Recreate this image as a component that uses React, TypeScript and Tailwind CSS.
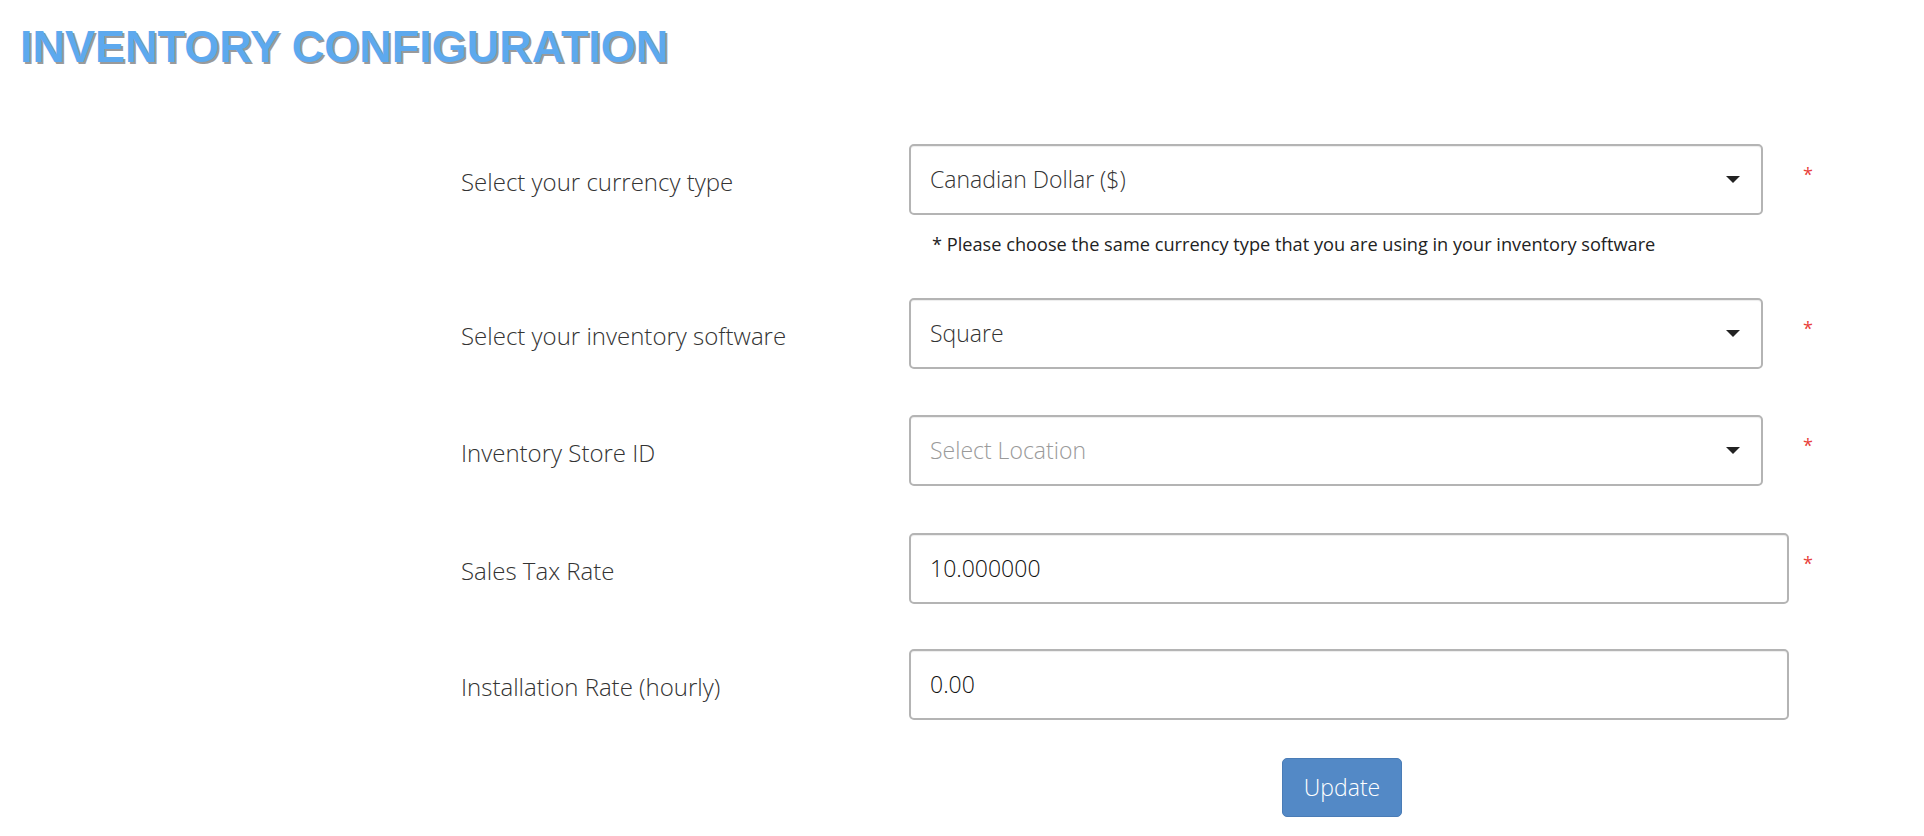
import React from "react";

const font = { fontFamily: '"Open Sans", "Noto Sans", sans-serif' };

function Arrow() {
  return (
    <svg width="14" height="7" viewBox="0 0 14 7" className="block">
      <path d="M0 0 L14 0 L7 7 Z" fill="#222" />
    </svg>
  );
}

function Asterisk() {
  return (
    <span className="self-start mt-[21px] ml-[14px] text-[18px] leading-[18px] text-[#e8413a]">*</span>
  );
}

function SelectBox({ value, placeholder }: { value?: string; placeholder?: string }) {
  return (
    <div className="w-[880px] flex">
      <div className="w-[854px] h-[71px] border-2 border-[#b4b4b4] rounded-[5px] flex items-center justify-between pl-[19px] pr-[21px] bg-white shadow-[inset_0_1px_1px_rgba(0,0,0,0.075)]">
        <span className={value ? "text-[23px] text-[#333] font-light" : "text-[23px] text-[#9a9a9a] font-light"}>
          {value ?? placeholder}
        </span>
        <Arrow />
      </div>
    </div>
  );
}

function InputBox({ value }: { value: string }) {
  return (
    <div className="w-[880px] h-[71px] border-2 border-[#b4b4b4] rounded-[5px] flex items-center pl-[19px] bg-white shadow-[inset_0_1px_1px_rgba(0,0,0,0.075)]">
      <span className="text-[23px] text-[#111] font-light">{value}</span>
    </div>
  );
}

function Label({ children }: { children: React.ReactNode }) {
  return (
    <div className="w-[448px] pt-[4px] text-[24px] text-[#333] font-light">{children}</div>
  );
}

export default function App() {
  return (
    <div className="min-h-[836px] bg-white" style={font}>
      <h1
        className="pl-[20px] pt-[24px] text-[45px] leading-[45px] font-bold text-[#5da9ee] [text-shadow:2px_2px_0_#9a9a9a]"
        style={{ fontFamily: '"Liberation Sans", Arial, sans-serif' }}
      >
        INVENTORY CONFIGURATION
      </h1>

      <div className="pl-[461px] mt-[75px] flex flex-col">
        <div className="flex items-center">
          <Label>Select your currency type</Label>
          <SelectBox value="Canadian Dollar ($)" />
          <Asterisk />
        </div>
        <div className="pl-[471px] mt-[17px] text-[18.2px] leading-[24px] text-[#222]">
          * Please choose the same currency type that you are using in your inventory software
        </div>

        <div className="flex items-center mt-[42px]">
          <Label>Select your inventory software</Label>
          <SelectBox value="Square" />
          <Asterisk />
        </div>

        <div className="flex items-center mt-[46px]">
          <Label>Inventory Store ID</Label>
          <SelectBox placeholder="Select Location" />
          <Asterisk />
        </div>

        <div className="flex items-center mt-[47px]">
          <Label>Sales Tax Rate</Label>
          <InputBox value="10.000000" />
          <Asterisk />
        </div>

        <div className="flex items-center mt-[45px]">
          <Label>Installation Rate (hourly)</Label>
          <InputBox value="0.00" />
        </div>

        <div className="pl-[821px] mt-[38px]">
          <button className="w-[120px] h-[59px] rounded-[5px] bg-[#5389c6] border border-[#4a7cb6] text-white text-[23px] font-light">
            Update
          </button>
        </div>
      </div>
    </div>
  );
}
